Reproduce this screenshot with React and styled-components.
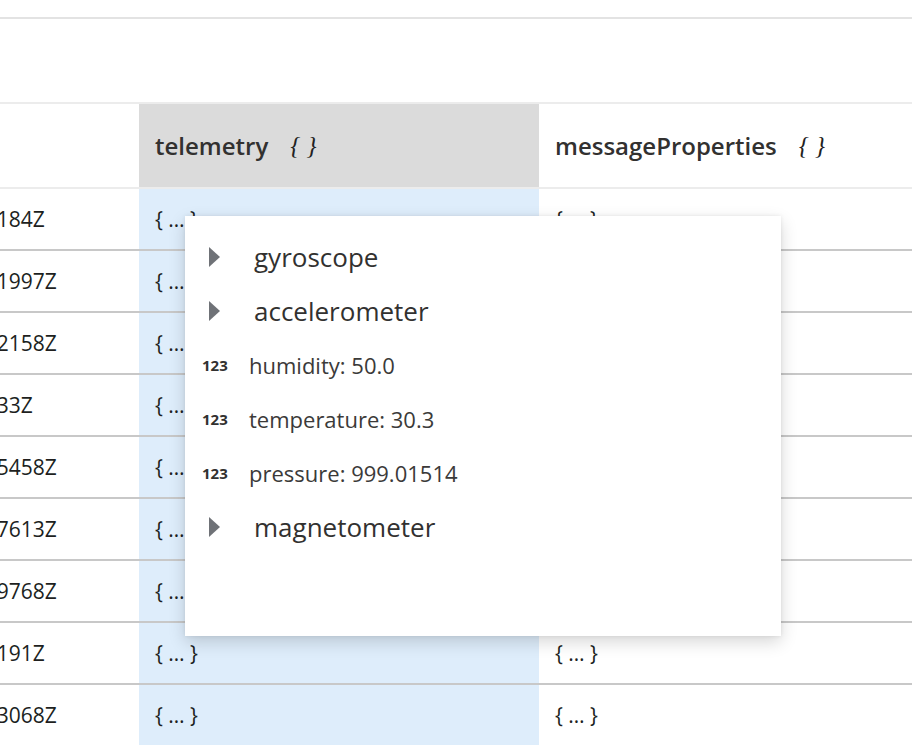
import React, { useLayoutEffect, useRef } from "react";
import styled, { createGlobalStyle } from "styled-components";

const GlobalStyle = createGlobalStyle`
  body {
    margin: 0;
    font-family: "Open Sans", "Noto Sans", sans-serif;
    color: #252423;
    background: #fff;
    overflow: hidden;
  }
`;

const Page = styled.div`
  position: relative;
  width: 912px;
  height: 745px;
  overflow: hidden;
`;

const TopStrip = styled.div`
  height: 17px;
  border-bottom: 2px solid #e3e3e3;
`;

const Toolbar = styled.div`
  height: 83px;
`;

const Scroller = styled.div`
  overflow: hidden;
  width: 100%;
`;

const Grid = styled.div`
  display: grid;
  grid-template-columns: 368px 400px 560px;
  width: max-content;
`;

const HeaderCell = styled.div`
  height: 87px;
  box-sizing: border-box;
  display: flex;
  align-items: center;
  gap: 22px;
  padding: 0 16px;
  border-top: 2px solid #ececec;
  border-bottom: 2px solid #ececec;
  background: ${(p) => (p.$active ? "#dbdbdb" : "#fff")};
  font-size: 24px;
  font-weight: 600;
  color: #323130;
`;

const Braces = styled.span`
  font-family: "Liberation Serif", serif;
  font-style: italic;
  font-weight: 400;
  font-size: 25px;
  color: #222;
`;

const Cell = styled.div`
  height: 62px;
  box-sizing: border-box;
  display: flex;
  align-items: center;
  padding: 0 16px;
  border-bottom: 2px solid #c8c8c8;
  background: ${(p) => (p.$active ? "#deedfb" : "#fff")};
  font-size: 21px;
  white-space: nowrap;
  color: #201f1e;
`;

const Popup = styled.div`
  position: absolute;
  left: 185px;
  top: 216px;
  width: 596px;
  height: 420px;
  box-sizing: border-box;
  padding-top: 14px;
  background: #fff;
  box-shadow: 0 6px 16px rgba(0, 0, 0, 0.16), 0 0 4px rgba(0, 0, 0, 0.08);
`;

const TreeRow = styled.div`
  height: 54px;
  display: flex;
  align-items: center;
  padding-left: ${(p) => (p.$leaf ? "17px" : "22px")};
  color: #323130;
`;

const Caret = styled.svg`
  width: 14px;
  height: 22px;
  flex: none;
`;

const NodeLabel = styled.span`
  margin-left: 33px;
  font-size: 26px;
`;

const TypeBadge = styled.span`
  width: 28px;
  font-size: 15px;
  font-weight: 700;
  color: #323130;
`;

const LeafLabel = styled.span`
  margin-left: 19px;
  font-size: 22px;
  color: #3b3a39;
`;

const timestamps = [
  "2021-06-21T10:02:31.184Z",
  "2021-06-21T10:02:31.1997Z",
  "2021-06-21T10:02:32.2158Z",
  "2021-06-21T10:02:32.33Z",
  "2021-06-21T10:02:32.5458Z",
  "2021-06-21T10:02:32.7613Z",
  "2021-06-21T10:02:32.9768Z",
  "2021-06-21T10:02:33.191Z",
  "2021-06-21T10:02:33.3068Z",
];

const tree = [
  { name: "gyroscope" },
  { name: "accelerometer" },
  { name: "humidity", value: "50.0" },
  { name: "temperature", value: "30.3" },
  { name: "pressure", value: "999.01514" },
  { name: "magnetometer" },
];

const Node = ({ item }) =>
  item.value === undefined ? (
    <TreeRow>
      <Caret viewBox="0 0 14 22">
        <polygon points="2,1 13,11 2,21" fill="#6f7277" />
      </Caret>
      <NodeLabel>{item.name}</NodeLabel>
    </TreeRow>
  ) : (
    <TreeRow $leaf>
      <TypeBadge>123</TypeBadge>
      <LeafLabel>
        {item.name}: {item.value}
      </LeafLabel>
    </TreeRow>
  );

const App = () => {
  const scrollRef = useRef(null);
  const firstRef = useRef(null);

  useLayoutEffect(() => {
    const el = firstRef.current;
    if (!el || !scrollRef.current) return;
    // keep the grid scrolled so the time column shows only its tail
    scrollRef.current.scrollLeft = el.offsetLeft + el.offsetWidth - 45;
  }, []);

  return (
    <Page>
      <GlobalStyle />
      <TopStrip />
      <Toolbar />
      <Scroller ref={scrollRef}>
        <Grid>
          <HeaderCell>enqueuedTime</HeaderCell>
          <HeaderCell $active>
            telemetry <Braces>{"{ }"}</Braces>
          </HeaderCell>
          <HeaderCell>
            messageProperties <Braces>{"{ }"}</Braces>
          </HeaderCell>
          {timestamps.map((t, i) => (
            <React.Fragment key={t}>
              <Cell>
                <span ref={i === 0 ? firstRef : null}>{t}</span>
              </Cell>
              <Cell $active>{"{ … }"}</Cell>
              <Cell>{"{ … }"}</Cell>
            </React.Fragment>
          ))}
        </Grid>
      </Scroller>
      <Popup>
        {tree.map((item) => (
          <Node key={item.name} item={item} />
        ))}
      </Popup>
    </Page>
  );
};

export default App;
